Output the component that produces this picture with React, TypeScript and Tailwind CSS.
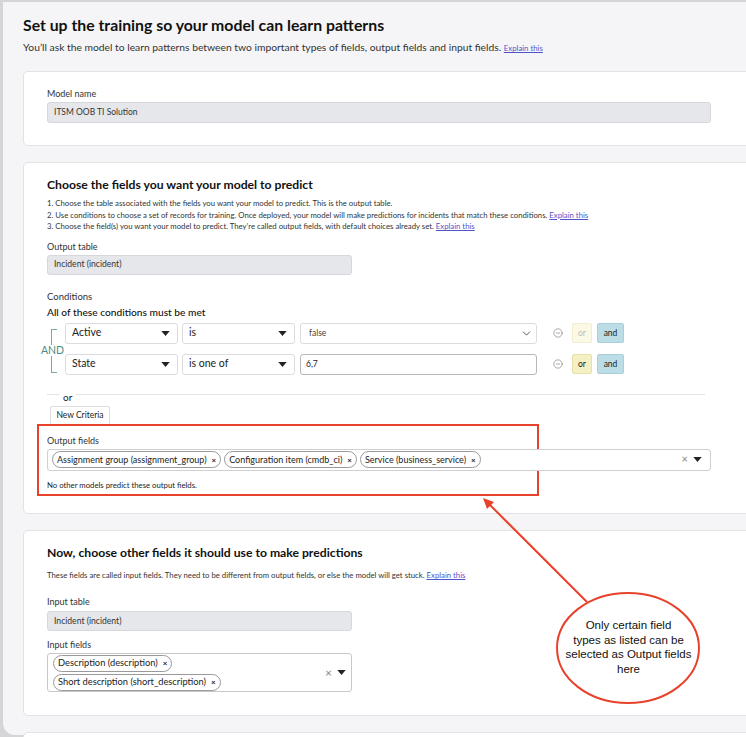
import React from 'react';
import { ChevronDown, CircleMinus } from 'lucide-react';

const Caret: React.FC<{ className?: string }> = ({ className }) => (
  <svg viewBox="0 0 10 6" className={className} width="9" height="5">
    <path d="M0 0h10L5 6z" fill="#222" />
  </svg>
);

const Select: React.FC<{ label: string }> = ({ label }) => (
  <div className="flex h-[21px] w-[113px] items-center justify-between rounded-[3px] border border-[#dcdcde] bg-white pl-[6px] pr-[7px] text-[10.5px] text-[#222]">
    <span>{label}</span>
    <Caret />
  </div>
);

const Chip: React.FC<{ label: string; className?: string }> = ({ label, className }) => (
  <span
    className={
      'inline-flex h-[17px] items-center gap-[5px] whitespace-nowrap rounded-full border border-[#9a9a9a] bg-white px-[4px] text-[#222] ' +
      (className ?? '')
    }
  >
    {label}
    <span className="text-[8px] font-bold">×</span>
  </span>
);

const Explain: React.FC = () => (
  <a className="text-[#4f55c9] underline">Explain this</a>
);

export default function App() {
  return (
    <div className="relative h-[737px] w-[746px] overflow-hidden bg-[#d5d5d7] pl-[3px] pt-[2px] font-['Lato',sans-serif]">
      <div className="h-[733px] rounded-bl-[12px] bg-[#f5f5f7] pt-[13px] text-[#222]">
        {/* header */}
        <div className="pl-[20px]">
          <h1 className="text-[15.8px] font-bold leading-[20px] text-[#111]">
            Set up the training so your model can learn patterns
          </h1>
          <p className="mt-[5px] text-[10.3px] leading-[14px] text-[#333]">
            You’ll ask the model to learn patterns between two important types of fields, output fields and input fields.{' '}
            <span className="text-[7.8px]">
              <Explain />
            </span>
          </p>
        </div>

        {/* model name */}
        <div className="ml-[20px] mt-[16px] h-[75px] w-[740px] rounded-[5px] border border-[#e2e2e5] bg-white pl-[23px] pt-[16px]">
          <div className="text-[9px] leading-[12px] text-[#333]">Model name</div>
          <div className="mt-[2px] flex h-[21px] w-[664px] items-center rounded-[3px] border border-[#d6d7db] bg-[#e6e7ea] pl-[6px] text-[8.5px] text-[#333]">
            ITSM OOB TI Solution
          </div>
        </div>

        {/* output */}
        <div className="ml-[20px] mt-[16px] h-[352px] w-[740px] rounded-[5px] border border-[#e2e2e5] bg-white pl-[23px] pt-[13px]">
          <h2 className="text-[12.2px] font-bold leading-[18px] text-[#111]">
            Choose the fields you want your model to predict
          </h2>
          <ol className="mt-[4px] text-[7.75px] leading-[11.5px] text-[#333]">
            <li>1. Choose the table associated with the fields you want your model to predict. This is the output table.</li>
            <li>
              2. Use conditions to choose a set of records for training. Once deployed, your model will make predictions for incidents that match these conditions.{' '}
              <Explain />
            </li>
            <li>
              3. Choose the field(s) you want your model to predict. They’re called output fields, with default choices already set.{' '}
              <Explain />
            </li>
          </ol>
          <div className="mt-[7px] text-[9px] leading-[13px] text-[#333]">Output table</div>
          <div className="mt-[2px] flex h-[20px] w-[305px] items-center rounded-[3px] border border-[#d6d7db] bg-[#e6e7ea] pl-[6px] text-[8.6px] text-[#333]">
            Incident (incident)
          </div>

          <div className="mt-[16px] text-[9.5px] leading-[12px] text-[#333]">Conditions</div>
          <div className="mt-[2px] text-[10.2px] font-medium leading-[14px] text-[#111]">All of these conditions must be met</div>

          <div className="mt-[4px] flex">
            <div className="-ml-[7px] flex w-[25px] flex-col pt-[6px] text-[#4d8c87]">
              <div className="ml-[11px] h-[16px] w-[6px] border-l border-t border-[#7aa9a5]" />
              <div className="text-center text-[10.5px] leading-[11px]">AND</div>
              <div className="ml-[11px] h-[17px] w-[6px] border-b border-l border-[#7aa9a5]" />
            </div>
            <div className="flex flex-col gap-[10px]">
              <div className="flex items-center">
                <Select label="Active" />
                <div className="ml-[4px]">
                  <Select label="is" />
                </div>
                <div className="ml-[5px] flex h-[21px] w-[237px] items-center justify-between rounded-[3px] border border-[#dcdcde] bg-white pl-[8px] pr-[3px] text-[8.5px] text-[#444]">
                  <span>false</span>
                  <ChevronDown size={13} strokeWidth={1.5} color="#333" />
                </div>
                <CircleMinus size={10} strokeWidth={1.5} color="#777" className="ml-[16px]" />
                <div className="ml-[9px] flex h-[20px] w-[20px] items-center justify-center rounded-[2px] border border-[#f1edcf] bg-[#fbf9e6] text-[8.5px] text-[#bbb]">
                  or
                </div>
                <div className="ml-[5px] flex h-[20px] w-[27px] items-center justify-center rounded-[2px] border border-[#a9d0da] bg-[#bcdde6] text-[8.5px] text-[#222]">
                  and
                </div>
              </div>
              <div className="flex items-center">
                <Select label="State" />
                <div className="ml-[4px]">
                  <Select label="is one of" />
                </div>
                <div className="ml-[5px] flex h-[21px] w-[237px] items-center rounded-[3px] border border-[#b8b8bc] bg-white pl-[5px] text-[8.5px] text-[#222]">
                  6,7
                </div>
                <CircleMinus size={10} strokeWidth={1.5} color="#777" className="ml-[16px]" />
                <div className="ml-[9px] flex h-[20px] w-[20px] items-center justify-center rounded-[2px] border border-[#e8e0a8] bg-[#f5efc4] text-[8.5px] text-[#222]">
                  or
                </div>
                <div className="ml-[5px] flex h-[20px] w-[27px] items-center justify-center rounded-[2px] border border-[#a9d0da] bg-[#bcdde6] text-[8.5px] text-[#222]">
                  and
                </div>
              </div>
            </div>
          </div>

          <div className="mt-[19px] w-[658px] border-t border-[#e4e4e6]" />
          <div className="-mt-[4px] ml-[12px] w-fit bg-white px-[4px] text-[10px] leading-[12px] text-[#222]">or</div>
          <div className="ml-[3px] mt-[3px] flex h-[20px] w-[60px] items-center justify-center rounded-[2px] border border-[#dedee0] bg-white text-[8.5px] text-[#222]">
            New Criteria
          </div>

          <div className="-ml-[10px] -mt-[2px] h-[72px] w-[502px] border-2 border-[#e8412c] pl-[8px] pt-[9px]">
            <div className="text-[9px] leading-[12px] text-[#333]">Output fields</div>
            <div className="mt-[2px] flex h-[22px] w-[664px] items-center gap-[3px] rounded-[3px] border border-[#d0d0d3] bg-white pl-[4px] text-[9px]">
              <Chip label="Assignment group (assignment_group)" />
              <Chip label="Configuration item (cmdb_ci)" />
              <Chip label="Service (business_service)" />
              <div className="ml-auto mr-[8px] flex items-center gap-[5px]">
                <span className="text-[11px] text-[#888]">×</span>
                <Caret />
              </div>
            </div>
            <div className="mt-[9px] text-[7.75px] leading-[10px] text-[#222]">No other models predict these output fields.</div>
          </div>
        </div>

        {/* input */}
        <div className="ml-[20px] mt-[16px] h-[186px] w-[740px] rounded-[5px] border border-[#e2e2e5] bg-white pl-[23px] pt-[13px]">
          <h2 className="text-[12.2px] font-bold leading-[18px] text-[#111]">
            Now, choose other fields it should use to make predictions
          </h2>
          <p className="mt-[8px] text-[7.75px] leading-[11px] text-[#333]">
            These fields are called input fields. They need to be different from output fields, or else the model will get stuck.{' '}
            <Explain />
          </p>
          <div className="mt-[14px] text-[9px] leading-[13px] text-[#333]">Input table</div>
          <div className="mt-[3px] flex h-[20px] w-[305px] items-center rounded-[3px] border border-[#d6d7db] bg-[#e6e7ea] pl-[6px] text-[8.6px] text-[#333]">
            Incident (incident)
          </div>
          <div className="mt-[7px] text-[9px] leading-[13px] text-[#333]">Input fields</div>
          <div className="mt-[2px] flex h-[39px] w-[305px] items-center rounded-[3px] border border-[#c8c8cc] bg-white pl-[5px] pr-[5px] text-[9.3px]">
            <div className="flex flex-col items-start gap-[2px]">
              <Chip label="Description (description)" className="h-[17px]" />
              <Chip label="Short description (short_description)" className="h-[17px]" />
            </div>
            <div className="ml-auto flex items-center gap-[5px]">
              <span className="text-[12px] text-[#888]">×</span>
              <Caret />
            </div>
          </div>
        </div>

        <div className="ml-[20px] mt-[16px] h-[40px] w-[740px] rounded-[5px] border border-[#e2e2e5] bg-white" />
      </div>

      {/* annotation callout */}
      <svg className="pointer-events-none absolute left-0 top-0" width="746" height="737" viewBox="0 0 746 737">
        <line x1="587" y1="602" x2="489" y2="504" stroke="#e8412c" strokeWidth="2" />
        <polygon points="483,498 494,502 487,509" fill="#e8412c" />
        <ellipse cx="628" cy="648" rx="71" ry="55" fill="#fff" stroke="#e8412c" strokeWidth="2" />
      </svg>
      <div className="pointer-events-none absolute left-[557px] top-[618px] w-[143px] text-center font-['Liberation_Sans',Arial,sans-serif] text-[11.5px] leading-[14.7px] text-[#111]">
        Only certain field
        <br />
        types as listed can be
        <br />
        selected as Output fields
        <br />
        here
      </div>
    </div>
  );
}
